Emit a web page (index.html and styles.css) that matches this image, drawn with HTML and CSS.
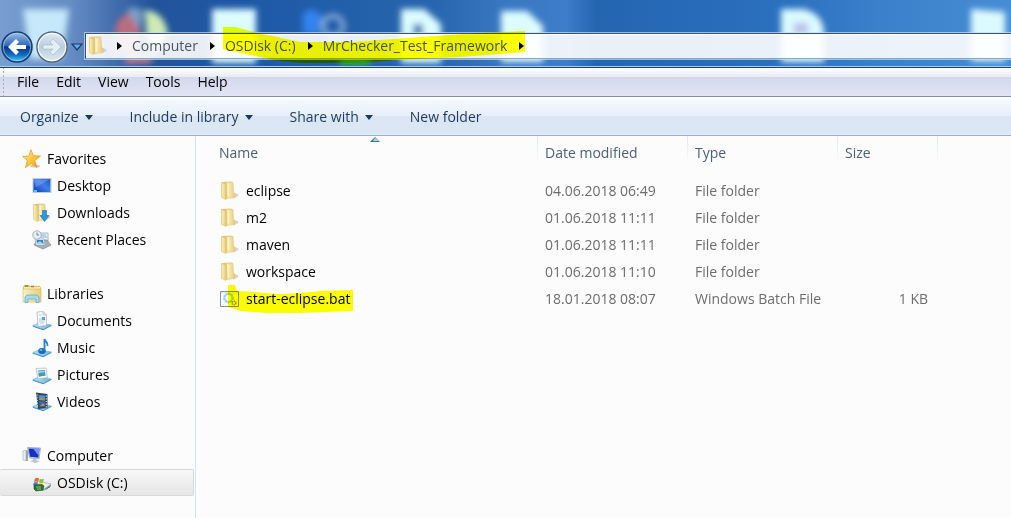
FILE: index.html
```html
<!DOCTYPE html>
<html lang="en">
<head>
<meta charset="utf-8">
<title>MrChecker_Test_Framework</title>
<link rel="stylesheet" href="styles.css">
</head>
<body>
<svg class="defs" aria-hidden="true">
  <defs>
    <linearGradient id="gold" x1="0" x2="1"><stop offset="0" stop-color="#fbf1c4"/><stop offset="1" stop-color="#ebcb74"/></linearGradient>
    <linearGradient id="screen" x1="0" y1="1" x2="1" y2="0"><stop offset="0" stop-color="#1239bd"/><stop offset=".55" stop-color="#3f7fe8"/><stop offset="1" stop-color="#2051c7"/></linearGradient>
    <linearGradient id="star" x1="0" x2="1" y2="1"><stop offset="0" stop-color="#fff39b"/><stop offset=".6" stop-color="#ffc02f"/><stop offset="1" stop-color="#ee8813"/></linearGradient>
    <linearGradient id="tray" x1="0" x2="1"><stop offset="0" stop-color="#b7e2f6"/><stop offset="1" stop-color="#70b6dc"/></linearGradient>
    <linearGradient id="blueball" x2="0" y2="1"><stop offset="0" stop-color="#9ec2e8"/><stop offset=".45" stop-color="#2f69b9"/><stop offset=".5" stop-color="#0a347f"/><stop offset=".75" stop-color="#1168c4"/><stop offset="1" stop-color="#3fd3fa"/></linearGradient>
    <linearGradient id="paleball" x2="0" y2="1"><stop offset="0" stop-color="#e0ebf5"/><stop offset=".5" stop-color="#b9cddd"/><stop offset="1" stop-color="#dfeaf2"/></linearGradient>
    <symbol id="folder" viewBox="0 0 20 20">
      <path d="M13 17.500 18.500 15l-.5-2-4-1z" fill="#b9bdc4" opacity=".6"/>
      <path d="M1.500 1.500 5 .8h7v15l-6 2z" fill="#e3c473"/>
      <path d="M6.500 1.300H13l.5 10 1.500 1v4.200L7 17.500z" fill="url(#gold)" stroke="#dfc37a" stroke-width=".5"/>
      <path d="M1.500 1.500 6 3v15.500l-4.500-2z" fill="url(#gold)" stroke="#dcc070" stroke-width=".6"/>
      <path d="M8.500 3v12" stroke="#fff6d0" stroke-width="1.600" opacity=".8"/>
    </symbol>
    <symbol id="i-star" viewBox="0 0 20 20"><ellipse cx="13" cy="17" rx="5" ry="1.500" fill="#ccc"/><path d="m9 .8 2.300 6L18.500 7l-5.700 4.600L15 18.500 9.300 14.500 3.500 18.500l1.900-7L.8 7.500l6-.5z" fill="url(#star)" stroke="#e29a2b" stroke-width=".8"/></symbol>
    <symbol id="i-desktop" viewBox="0 0 20 20"><path d="M.5 2h19v15H.5z" fill="#bccbe2"/><path d="M1.500 3h16.800v13H1.500z" fill="url(#screen)"/><path d="M2 3.500h15.500L4 11z" fill="#78a9ef" opacity=".5"/><path d="M2 14h3v2H2z" fill="#40d0d8"/></symbol>
    <symbol id="i-download" viewBox="0 0 20 20"><use href="#folder"/><path d="M10.500 7.500h4v5H17L12.500 18.500l-4.500-6h2.500z" fill="#2d9ae0" stroke="#1671b5" stroke-width=".6"/></symbol>
    <symbol id="i-recent" viewBox="0 0 20 20"><path d="M7 3h9v8H7z" fill="#edf5fb" stroke="#a9bac6"/><path d="M9 5h5M9 7h6" stroke="#7fb0d4"/><path d="m2 15 3-5h10l4 5-8 4z" fill="#a7b0b8" stroke="#727b84" stroke-width=".6"/><path d="M3 9h9l1 6H4z" fill="#f4fafe" stroke="#8295a5" stroke-width=".6"/><path d="M4.500 10H11l.7 4H5z" fill="#2e82c4"/><path d="m5 13 3-2 3.500 3H5z" fill="#a9d7dc"/><circle cx="5" cy="5" r="4.200" fill="#eaf1f5" stroke="#a5b2bc"/><path d="M5 2.500V5h2" stroke="#6c8798" fill="none"/></symbol>
    <symbol id="i-library" viewBox="0 0 20 20"><path d="M1 3 2 1h5l1 1h10l1 2v13H1z" fill="#e2be55"/><path d="M2 3h16v3H2z" fill="#f8eeb5"/><path d="M3 2h3" stroke="#43a94c" stroke-width="1.500"/><path d="M9 2.500h3" stroke="#e45a48" stroke-width="1.500"/><path d="M1 5h18v13H1z" fill="url(#gold)" stroke="#d6b962" stroke-width=".6"/><path d="M3 18.500V13l2-2h10l2 2v5.500h-3V15H6v3.500z" fill="#a6daf0" stroke="#5fadd2" stroke-width=".8"/></symbol>
    <symbol id="traybase" viewBox="0 0 20 20"><path d="m.8 14.500 6-2.500 12.500 2-8 4.500z" fill="url(#tray)" stroke="#64acd4" stroke-width=".6"/><path d="M.8 14.700v1l10.500 3.500 8-4.200v-1l-8 4.300z" fill="#438fbd"/></symbol>
    <symbol id="i-document" viewBox="0 0 20 20"><use href="#traybase"/><path d="m5 1 6-.5 3.500 3v11l-8.500 1z" fill="#f6f8fc" stroke="#a9afc0" stroke-width=".7"/><path d="M11 .8V4h3.500" fill="#dbe2ef" stroke="#a9afc0" stroke-width=".6"/><path d="M7 4h2M7 8h5M7 10h6M8 12h4" stroke="#a3b9d6" stroke-width=".8"/><path d="M10 6h3v3h-3z" fill="#6b9acd"/></symbol>
    <symbol id="i-music" viewBox="0 0 20 20"><use href="#traybase"/><ellipse cx="10" cy="13" rx="3.800" ry="3" fill="#176cbd"/><path d="M12.500 13V1c.5 3 4 3 3 7" fill="none" stroke="#267dc8" stroke-width="1.800"/><ellipse cx="9" cy="12" rx="1.500" ry="1" fill="#61b7ef"/></symbol>
    <symbol id="i-picture" viewBox="0 0 20 20"><use href="#traybase"/><path d="m4 3.500 10-.5 1.500 9.500L6 14z" fill="#f5f8fa" stroke="#aab7c1" stroke-width=".7"/><path d="m5.700 5.500 7-.5.900 5.500L7 11.500z" fill="#489bd5"/><path d="m6.500 9.500 3-1.500 4 2.500-6.500 1z" fill="#509b82"/><path d="m6 6.500 6.500-.5v1l-6.500 1z" fill="#b6e4f3"/></symbol>
    <symbol id="i-video" viewBox="0 0 20 20"><use href="#traybase"/><path d="M4 .5 15.500 2v14L6 17z" fill="#33434f"/><path d="m6.500 3 6.500.5v5L7 8z" fill="#2f9ae2"/><path d="m7 9 6 .5v5l-5.500.5z" fill="#2370b8"/><path d="m7 7 3-2 3 3.500-6-.5zM8 14l3-3 2 3z" fill="#e17b43"/><path d="m5 2.500.5 13M14.300 3.500v12" stroke="#d9e5e8" stroke-width="1.200" stroke-dasharray="1.200 1.500"/></symbol>
    <symbol id="i-computer" viewBox="0 0 20 20"><path d="m1 5 3-1v11l-3-1z" fill="#eceff0" stroke="#a6adb5" stroke-width=".6"/><path d="m4 4 2 1v10H4z" fill="#9ba6b1"/><path d="m5.500 1.500 13 .5-1.500 11-9.500-1z" fill="#d7dde9" stroke="#8999b5" stroke-width=".7"/><path d="m6.500 2.500 11 .3-1.200 9L8 10.700z" fill="#1730c5"/><path d="m11 2.600 6.500.2-.8 7z" fill="#739bf1"/><path d="m11 12.500 3 .3 1 1.700 3 1-5 1.500-5-2 3-1z" fill="#bfc6cd"/></symbol>
    <symbol id="i-disk" viewBox="0 0 20 20"><path d="m2 14 8-5 9 2-8 6z" fill="#edf0f1" stroke="#8e9598" stroke-width=".6"/><path d="m2 14 9 3 8-6v2.500L11 18l-9-1.500z" fill="#9ca2a5"/><path d="m15 15.500 3-2" stroke="#555e62"/><path d="M3 5.500q2-1.200 4-.2L6.300 9Q4 8 2 9z" fill="#ec6538"/><path d="M7.700 5.700q2 1 4.300 0l-1 3.800q-2 1-4-.2z" fill="#7fc34a"/><path d="M2 9.500q2-.7 4-.1L5.500 12 1 12z" fill="#4084cf"/><path d="M7 9.700q2 .8 4 .2l-.5 2.800-4-.5z" fill="#ffd14c"/><path d="m2 12 8-.5 2 1.500-1 4-7 1-2-2z" fill="#31702f" stroke="#184d20" stroke-width=".6"/><path d="M4 14h5M5 16h4" stroke="#89c477"/><path d="M13 16h2" stroke="#37b341" stroke-width="1.200"/></symbol>
    <symbol id="i-batch" viewBox="0 0 20 20"><path d="M.5 2.500h18v15H.5z" fill="#fafcfd" stroke="#8a9197"/><path d="M1 3h17v1.500H1z" fill="#e4e9ec"/><circle cx="8.500" cy="9" r="4.200" fill="#fff" stroke="#9ecbe0" stroke-width="2.400" stroke-dasharray="2 .7"/><circle cx="8.500" cy="9" r="3.900" fill="none" stroke="#a8d2e6"/><circle cx="14" cy="14" r="1.900" fill="#e8ebe8" stroke="#8b9791" stroke-width="1.400" stroke-dasharray="1.300 .6"/></symbol>
    <symbol id="down" viewBox="0 0 8 5"><path d="M0 0h8L4 5z" fill="currentColor"/></symbol>
    <symbol id="right" viewBox="0 0 5 8"><path d="M0 0v8l5-4z" fill="currentColor"/></symbol>
  </defs>
</svg>

<div class="window">
  <header class="glass">
    <svg class="backdrop" viewBox="0 0 1011 67" preserveAspectRatio="xMinYMin slice" aria-hidden="true">
      <defs>
        <linearGradient id="sky"><stop offset="0" stop-color="#789ed0"/><stop offset=".07" stop-color="#668dc3"/><stop offset=".15" stop-color="#225499"/><stop offset=".24" stop-color="#1d58a6"/><stop offset=".43" stop-color="#2766ae"/><stop offset=".5" stop-color="#3a77c1"/><stop offset=".56" stop-color="#3d7dca"/><stop offset=".59" stop-color="#2465b0"/><stop offset=".78" stop-color="#2b71bf"/><stop offset=".87" stop-color="#3b80ca"/><stop offset="1" stop-color="#468dd5"/></linearGradient>
        <filter id="soft" x="-5%" y="-30%" width="110%" height="160%"><feGaussianBlur stdDeviation="3"/></filter>
      </defs>
      <path d="M0 0h1011v67H0z" fill="url(#sky)"/>
      <g filter="url(#soft)">
        <path d="M23 9h46l-7 50H30z" fill="#c5e8fa"/>
        <path d="M115 31q2-16 18-19l8 18-5 26-17-9z" fill="#ba6d80"/>
        <path d="M126 10q10-6 17 2l-3 18z" fill="#7c9fc5"/>
        <path d="M145 10q20 2 23 24l-13 20-8-12z" fill="#cdebb4"/>
        <path d="M125 56h27v7h-27z" fill="#d57986"/>
        <path d="M212 9h44v54h-44zM401 9h23l17 15v39h-40zM501 11h26l16 15v36h-42z" fill="#dcfcff"/>
        <path d="M303 13q13-9 20 6l-6 18-14-5z" fill="#3183ed"/>
        <circle cx="333" cy="26" r="10" fill="none" stroke="#83a8d4" stroke-width="5"/>
        <path d="M413 24h10v13h-10z" fill="#4d86bb"/>
        <path d="M340 59h30v6h-30z" fill="#35b92d"/>
        <path d="M781 9h22q22 5 21 27v26h-43zM971 9l34 3v49h-34z" fill="#dbfaff"/>
        <path d="M794 23h14v11h-14z" fill="#b9bfe8"/>
      </g>
    </svg>
    <nav class="travel" aria-label="Navigation">
      <button class="round" aria-label="Back"><svg viewBox="0 0 32 32"><circle cx="16" cy="16" r="15" fill="url(#blueball)" stroke="#173c70" stroke-width="1.500"/><circle cx="16" cy="16" r="13.700" fill="none" stroke="#b4d8f5" opacity=".65"/><path d="m7 16 8-8 3 3-3 3h10v4H15l3 3-3 3z" fill="#fff"/></svg></button>
      <button class="round" aria-label="Forward"><svg viewBox="0 0 32 32"><circle cx="16" cy="16" r="15" fill="url(#paleball)" stroke="#4f6480" stroke-width="1.500"/><circle cx="16" cy="16" r="13.700" fill="none" stroke="#f7fbfe" stroke-width="1.200"/><path d="m25 16-8-8-3 3 3 3H7v4h10l-3 3 3 3z" fill="#e4eef5" stroke="#a8bac8" stroke-width=".6"/></svg></button>
      <button class="recent" aria-label="Recent pages"><svg viewBox="0 0 12 8"><path d="M1 1h10L6 7z" fill="#5cadea" stroke="#163b6c" stroke-width="1.200"/></svg></button>
    </nav>
    <div class="address">
      <svg class="icon" aria-hidden="true"><use href="#folder"/></svg>
      <ol class="crumbs">
        <li><svg class="right"><use href="#right"/></svg><a href="#computer">Computer</a></li>
        <li><svg class="right"><use href="#right"/></svg><a href="#disk">OSDisk (C:)</a></li>
        <li><svg class="right"><use href="#right"/></svg><a href="#framework">MrChecker_Test_Framework</a></li>
        <li><svg class="right"><use href="#right"/></svg></li>
      </ol>
      <svg class="marker marker-path" viewBox="0 0 302 37" aria-hidden="true"><path d="M0 0h12l8 2 14 4 16 3 13 3 15 3h52l54-4 42-3 31-2 45-2v21l-65 5-67 3-33 3H77l-26-3-24-5-27-6z"/></svg>
    </div>
  </header>

  <nav class="menubar" aria-label="Menu">
    <button>File</button><button>Edit</button><button>View</button><button>Tools</button><button>Help</button>
  </nav>

  <div class="toolbar">
    <button>Organize<svg class="down"><use href="#down"/></svg></button>
    <button>Include in library<svg class="down"><use href="#down"/></svg></button>
    <button>Share with<svg class="down"><use href="#down"/></svg></button>
    <button>New folder</button>
  </div>

  <div class="content">
    <aside class="sidebar">
      <section>
        <a class="root" href="#favorites"><svg class="icon"><use href="#i-star"/></svg>Favorites</a>
        <a href="#desktop"><svg class="icon"><use href="#i-desktop"/></svg>Desktop</a>
        <a href="#downloads"><svg class="icon"><use href="#i-download"/></svg>Downloads</a>
        <a href="#recent"><svg class="icon"><use href="#i-recent"/></svg>Recent Places</a>
      </section>
      <section>
        <a class="root" href="#libraries"><svg class="icon"><use href="#i-library"/></svg>Libraries</a>
        <a href="#documents"><svg class="icon"><use href="#i-document"/></svg>Documents</a>
        <a href="#music"><svg class="icon"><use href="#i-music"/></svg>Music</a>
        <a href="#pictures"><svg class="icon"><use href="#i-picture"/></svg>Pictures</a>
        <a href="#videos"><svg class="icon"><use href="#i-video"/></svg>Videos</a>
      </section>
      <section>
        <a class="root" href="#computer"><svg class="icon"><use href="#i-computer"/></svg>Computer</a>
        <a class="selected" href="#disk"><svg class="icon"><use href="#i-disk"/></svg>OSDisk (C:)</a>
      </section>
    </aside>
    <main class="files">
      <table>
        <colgroup><col class="c-name"><col class="c-date"><col class="c-type"><col class="c-size"><col></colgroup>
        <thead><tr><th class="sorted" aria-sort="ascending">Name<svg class="sort" viewBox="0 0 10 5" aria-hidden="true"><path d="m0 5 5-5 5 5z" fill="#3f7599"/><path d="m3 4 2-3 4 3z" fill="#a8dcf2"/></svg></th><th>Date modified</th><th>Type</th><th>Size</th><td></td></tr></thead>
        <tbody>
          <tr><td><span class="file"><svg class="icon"><use href="#folder"/></svg>eclipse</span></td><td>04.06.2018 06:49</td><td>File folder</td><td></td><td></td></tr>
          <tr><td><span class="file"><svg class="icon"><use href="#folder"/></svg>m2</span></td><td>01.06.2018 11:11</td><td>File folder</td><td></td><td></td></tr>
          <tr><td><span class="file"><svg class="icon"><use href="#folder"/></svg>maven</span></td><td>01.06.2018 11:11</td><td>File folder</td><td></td><td></td></tr>
          <tr><td><span class="file"><svg class="icon"><use href="#folder"/></svg>workspace</span></td><td>01.06.2018 11:10</td><td>File folder</td><td></td><td></td></tr>
          <tr><td><span class="file"><svg class="icon"><use href="#i-batch"/></svg>start-eclipse.bat<svg class="marker marker-file" viewBox="0 0 125 28" aria-hidden="true"><path d="M0 0h7l2 6 18 1 22 2 24-1 19-2 33-1v21l-28 1-25 1H37l-25-2-12-4z"/></svg></span></td><td>18.01.2018 08:07</td><td>Windows Batch File</td><td>1 KB</td><td></td></tr>
        </tbody>
      </table>
    </main>
  </div>
</div>
</body>
</html>
```

FILE: styles.css
```css
* { box-sizing: border-box; }
body {
  margin: 0;
  background: #fcfcfc;
  color: #000;
  font-family: "Open Sans", "Noto Sans", sans-serif;
  font-size: 14px;
  line-height: 20px;
}
button {
  margin: 0;
  padding: 0;
  border: 0;
  background: none;
  color: inherit;
  font: inherit;
}
a { color: inherit; text-decoration: none; }
svg { display: block; flex: none; }
.defs { position: absolute; width: 0; height: 0; }
.window { display: flex; flex-direction: column; min-height: 100vh; overflow: hidden; }
.icon { width: 20px; height: 20px; }

.glass {
  position: relative;
  display: flex;
  align-items: flex-start;
  gap: 2px;
  padding: 31px 0 4px 1px;
  border-bottom: 1px solid #213e66;
  box-shadow: inset 0 -1px #a9cbed;
}
.backdrop { position: absolute; z-index: -1; inset: 0; width: 100%; height: 100%; }
.travel { display: flex; align-items: center; gap: 3px; }
.round svg { width: 32px; height: 32px; }
.recent svg { width: 12px; height: 8px; }
.address {
  position: relative;
  flex: 1;
  display: flex;
  align-items: center;
  gap: 9px;
  height: 26px;
  margin-top: 2px;
  padding-left: 2px;
  border: 1px solid #40516b;
  border-width: 1px 0 1px 1px;
  border-bottom-color: #8ba6c4;
  background: rgba(255, 255, 255, 0.9);
  box-shadow: 0 0 0 1px rgba(190, 222, 250, 0.7), inset 1px 1px #fff;
  color: #4c5663;
}
.crumbs { display: flex; margin: 0; padding: 0; list-style: none; }
.crumbs li { display: flex; align-items: center; gap: 10px; margin-right: 12px; }
.right { width: 5px; height: 8px; color: #000; }
.marker { position: absolute; fill: #ff0; mix-blend-mode: multiply; pointer-events: none; }
.marker-path { left: 137px; top: -7px; width: 302px; height: 37px; }

.menubar {
  display: flex;
  gap: 17px;
  padding: 4px 0 4px 17px;
  border-bottom: 1px solid #878fa5;
  background:
    radial-gradient(circle, #a9b0bd 1px, transparent 1px) 2px 2px / 3px 4px repeat-y,
    linear-gradient(#fff, #e6ebf4 32%, #d2d8ea 33%, #e3e5f6);
}
.toolbar {
  display: flex;
  gap: 37px;
  padding: 10px 0 8px 20px;
  border-bottom: 1px solid #9faec6;
  background: linear-gradient(#fff, #f3f8fe 10%, #e6f0fa 49%, #dbe6f4 50%, #dce7f5 95%, #e6eef8);
  color: #1e395b;
}
.toolbar button { display: flex; align-items: center; gap: 6px; }
.down { width: 8px; height: 5px; }

.content { flex: 1; display: flex; }
.sidebar {
  flex: none;
  display: flex;
  flex-direction: column;
  gap: 27px;
  width: 196px;
  padding: 9px 1px 21px 0;
  border-right: 1px solid #d6e5f5;
}
.sidebar a {
  display: flex;
  align-items: center;
  gap: 5px;
  height: 27px;
  padding-left: 32px;
}
.sidebar .root { padding-left: 22px; }
.sidebar .selected {
  border: 1px solid #d9d9d9;
  border-left: 0;
  border-radius: 2px;
  background: linear-gradient(#f8f8f8, #e5e5e5);
}

.files { flex: 1; min-width: 0; }
table { width: 100%; border-collapse: collapse; table-layout: fixed; }
.c-name { width: 342px; }
.c-date, .c-type { width: 150px; }
.c-size { width: 100px; }
th {
  position: relative;
  padding: 7px 0 0 7px;
  background: linear-gradient(#d9e8f6, #fcfcfc) right / 1px 100% no-repeat;
  color: #4c607a;
  font-weight: 400;
  text-align: left;
  height: 27px;
}
th:first-child { padding-left: 23px; }
.sort { position: absolute; left: 51%; top: 1px; width: 10px; height: 5px; }
td { height: 27px; padding: 0 0 0 7px; color: #6d6d6d; white-space: nowrap; }
tbody::before { content: ""; display: block; height: 14px; }
td:first-child { padding-left: 24px; color: #000; }
td:nth-child(4) { padding-right: 10px; text-align: right; }
.file { position: relative; display: flex; align-items: center; gap: 6px; }
.marker-file { left: 8px; top: -4px; width: 125px; height: 28px; }
```
